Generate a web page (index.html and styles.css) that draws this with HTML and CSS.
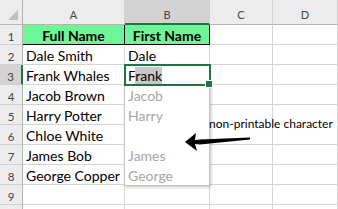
FILE: index.html
```html
<!DOCTYPE html>
<html lang="en">
<head>
    <meta charset="UTF-8">
    <title>First Name autocomplete</title>
    <link rel="stylesheet" href="styles.css">
</head>
<body>
    <div class="sheet">
        <div class="grid">
            <div class="corner">
                <svg width="10" height="10" viewBox="0 0 10 10"><polygon points="10,0 10,10 0,10" fill="#bdbdbd"/></svg>
            </div>
            <div class="col-head">A</div>
            <div class="col-head is-active">B</div>
            <div class="col-head">C</div>
            <div class="col-head">D</div>

            <div class="row-head">1</div>
            <div class="cell title">Full Name</div>
            <div class="cell title">First Name</div>
            <div class="cell"></div>
            <div class="cell"></div>

            <div class="row-head">2</div>
            <div class="cell">Dale Smith</div>
            <div class="cell">Dale</div>
            <div class="cell"></div>
            <div class="cell"></div>

            <div class="row-head is-active">3</div>
            <div class="cell">Frank Whales</div>
            <div class="cell active">F<span class="typed">rank</span></div>
            <div class="cell"></div>
            <div class="cell"></div>

            <div class="row-head">4</div>
            <div class="cell">Jacob Brown</div>
            <div class="cell"></div>
            <div class="cell"></div>
            <div class="cell"></div>

            <div class="row-head">5</div>
            <div class="cell">Harry Potter</div>
            <div class="cell"></div>
            <div class="cell no-line"></div>
            <div class="cell no-line"></div>

            <div class="row-head">6</div>
            <div class="cell">Chloe White</div>
            <div class="cell"></div>
            <div class="cell"></div>
            <div class="cell"></div>

            <div class="row-head">7</div>
            <div class="cell">James Bob</div>
            <div class="cell"></div>
            <div class="cell"></div>
            <div class="cell"></div>

            <div class="row-head">8</div>
            <div class="cell">George Copper</div>
            <div class="cell"></div>
            <div class="cell"></div>
            <div class="cell"></div>

            <div class="row-head">9</div>
            <div class="cell"></div>
            <div class="cell"></div>
            <div class="cell"></div>
            <div class="cell"></div>

            <div class="row-head"></div>
            <div class="cell"></div>
            <div class="cell"></div>
            <div class="cell"></div>
            <div class="cell"></div>
        </div>

        <ul class="pick-list">
            <li>Jacob</li>
            <li>Harry</li>
            <li></li>
            <li>James</li>
            <li>George</li>
        </ul>

        <svg class="arrow" width="70" height="22" viewBox="0 0 70 22">
            <polygon points="2,12 13,3 12,10 17,9.5 67,7.5 67,9.5 17,14.5 12,14 14,21" fill="#000"/>
        </svg>

        <span class="note">non-printable character</span>
    </div>
</body>
</html>
```

FILE: styles.css
```css
* {
    margin: 0;
    padding: 0;
    box-sizing: border-box;
}

body {
    width: 338px;
    height: 209px;
    overflow: hidden;
    background: white;
    font-family: Lato, "Liberation Sans", sans-serif;
    color: #000;
}

.sheet {
    position: relative;
}

.grid {
    display: grid;
    grid-template-columns: 23px 102px 85px 63px 65px;
    grid-template-rows: 25px repeat(10, 20px);
}

.corner {
    background: #ececec;
    border-right: 1px solid #b4b4b4;
    border-bottom: 1px solid #b4b4b4;
    display: flex;
    align-items: flex-end;
    justify-content: flex-end;
    padding: 0 4px 4px 0;
}

.col-head {
    background: #ececec;
    border-right: 1px solid #d0d0d0;
    border-bottom: 1px solid #b4b4b4;
    text-align: center;
    font-size: 11px;
    line-height: 14px;
    padding-top: 8px;
    color: #444;
}

.col-head.is-active {
    background: #d3d3d3;
    border-bottom: 2px solid #217346;
}

.row-head {
    background: #ececec;
    border-right: 1px solid #b4b4b4;
    border-bottom: 1px solid #d0d0d0;
    text-align: center;
    font-size: 11.5px;
    line-height: 19px;
    padding-top: 2px;
    color: #444;
}

.row-head.is-active {
    background: #d3d3d3;
    border-right: 2px solid #217346;
}

.cell {
    border-right: 1px solid #d4d4d4;
    border-bottom: 1px solid #d4d4d4;
    font-size: 14px;
    line-height: 19px;
    padding: 1px 3px 0;
    white-space: nowrap;
}

.cell.no-line {
    border-bottom-color: white;
}

.cell.title {
    background: #6ef597;
    border-right-color: #000;
    border-bottom-color: #000;
    font-weight: 700;
    text-align: center;
}

.cell.active {
    position: relative;
    z-index: 3;
    outline: 2px solid #217346;
    outline-offset: -1px;
}

.cell.active::after {
    content: "";
    position: absolute;
    right: -4px;
    bottom: -4px;
    width: 6px;
    height: 6px;
    background: #217346;
    border: 1px solid white;
}

.typed {
    background: #c8c8c8;
}

.pick-list {
    position: absolute;
    left: 124px;
    top: 85px;
    width: 86px;
    height: 101px;
    list-style: none;
    background: white;
    border: 1px solid #c6c6c6;
    border-top: none;
    box-shadow: 1px 1px 3px rgba(0, 0, 0, 0.25);
    z-index: 2;
}

.pick-list li {
    height: 20px;
    font-size: 14px;
    line-height: 19px;
    padding: 1px 3px 0;
    color: #a6a6a6;
}

.arrow {
    position: absolute;
    left: 183px;
    top: 130px;
    z-index: 4;
}

.note {
    position: absolute;
    left: 209px;
    top: 117px;
    font-size: 12px;
    line-height: 14px;
    white-space: nowrap;
    z-index: 4;
}
```
